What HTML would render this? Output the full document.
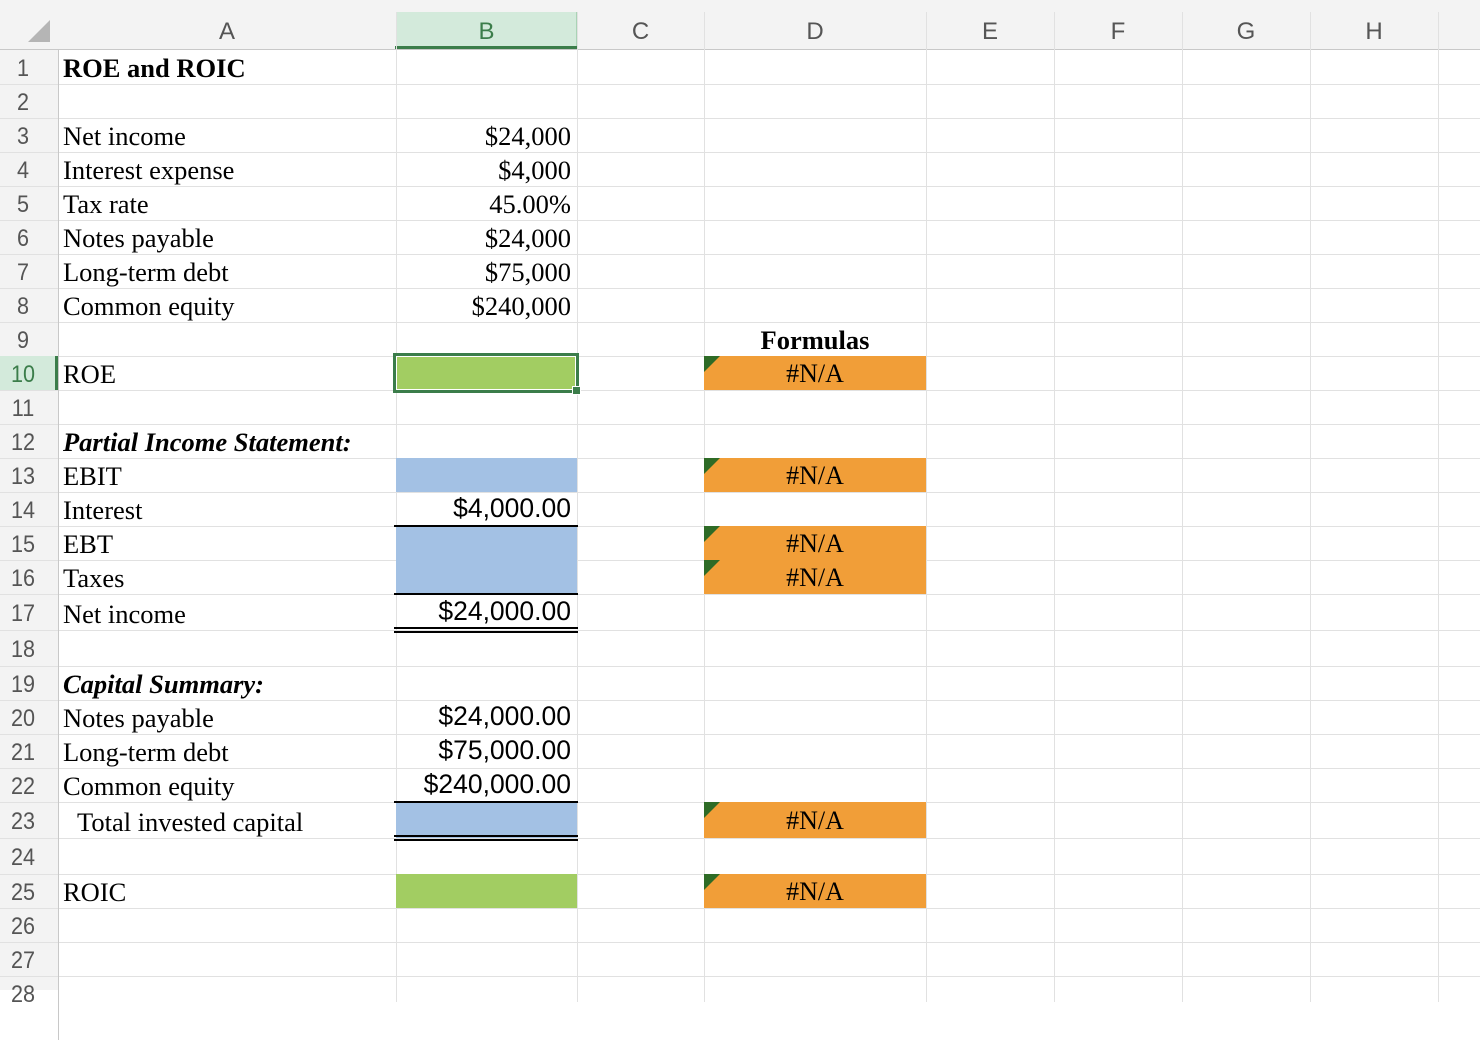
<!DOCTYPE html>
<html><head><meta charset="utf-8"><style>
body{margin:0;width:1480px;height:990px;overflow:hidden;background:#fff;position:relative;font-family:"Liberation Serif",serif}
div{position:absolute;box-sizing:border-box}
.hl{height:1px;background:#e1e1e1;left:0;width:1480px}
.vl{width:1px;background:#e1e1e1;top:12px;height:990px}
.rh{left:0;width:46px;color:#555;font-family:"Liberation Sans",sans-serif;font-size:24px;text-align:center;line-height:34px;transform:scaleX(0.9)}
.ch{top:12px;height:38px;line-height:40px;color:#555;font-family:"Liberation Sans",sans-serif;font-size:24px;text-align:center}
.t{left:63px;font-size:26.5px;line-height:34px;white-space:nowrap;color:#000;top:1px}
.n{left:396px;width:181px;text-align:right;padding-right:6px;font-size:26.5px;line-height:34px}
.s{left:396px;width:181px;text-align:right;padding-right:6px;font-family:"Liberation Sans",sans-serif;font-size:26.5px;line-height:34px}
.o{left:704px;width:222px;background:#f19e38;text-align:center;font-size:26px;line-height:36px;height:34px}
.o:before{content:"";position:absolute;left:0;top:0;border-top:16px solid #2e6b26;border-right:16px solid transparent}
.bl{left:396px;width:181px;background:#a3c1e4}
.gr{left:396px;width:181px;background:#a2cd62}
.k{left:394px;width:184px;background:#000}
</style></head><body>
<div style="left:0;top:0;width:1480px;height:50px;background:#f3f3f3"></div>
<div style="left:0;top:50px;width:58px;height:940px;background:#f3f3f3"></div>
<div style="left:28px;top:20px;width:0;height:0;border-bottom:22px solid #b5b5b5;border-left:22px solid transparent"></div>
<div style="left:396px;top:12px;width:181px;height:38px;background:#d3eadb;border-left:1px solid #a9d3b5;border-right:1px solid #a9d3b5"></div>
<div style="left:395px;top:46px;width:183px;height:4px;background:#3b7d4a"></div>
<div class="hl" style="top:49px;background:#c8c8c8"></div>
<div class="hl" style="top:84px"></div><div class="hl" style="top:118px"></div><div class="hl" style="top:152px"></div><div class="hl" style="top:186px"></div><div class="hl" style="top:220px"></div><div class="hl" style="top:254px"></div><div class="hl" style="top:288px"></div><div class="hl" style="top:322px"></div><div class="hl" style="top:356px"></div><div class="hl" style="top:390px"></div><div class="hl" style="top:424px"></div><div class="hl" style="top:458px"></div><div class="hl" style="top:492px"></div><div class="hl" style="top:526px"></div><div class="hl" style="top:560px"></div><div class="hl" style="top:594px"></div><div class="hl" style="top:630px"></div><div class="hl" style="top:666px"></div><div class="hl" style="top:700px"></div><div class="hl" style="top:734px"></div><div class="hl" style="top:768px"></div><div class="hl" style="top:802px"></div><div class="hl" style="top:838px"></div><div class="hl" style="top:874px"></div><div class="hl" style="top:908px"></div><div class="hl" style="top:942px"></div><div class="hl" style="top:976px"></div>
<div class="vl" style="left:58px;background:#c8c8c8;top:50px"></div>
<div class="vl" style="left:396px"></div><div class="vl" style="left:577px"></div><div class="vl" style="left:704px"></div><div class="vl" style="left:926px"></div><div class="vl" style="left:1054px"></div><div class="vl" style="left:1182px"></div><div class="vl" style="left:1310px"></div><div class="vl" style="left:1438px"></div>
<div class="ch" style="left:58px;width:338px">A</div>
<div class="ch" style="left:396px;width:181px;color:#3b7d4a">B</div>
<div class="ch" style="left:577px;width:127px">C</div>
<div class="ch" style="left:704px;width:222px">D</div>
<div class="ch" style="left:926px;width:128px">E</div>
<div class="ch" style="left:1054px;width:128px">F</div>
<div class="ch" style="left:1182px;width:128px">G</div>
<div class="ch" style="left:1310px;width:128px">H</div>
<div class="rh" style="top:52px">1</div><div class="rh" style="top:86px">2</div><div class="rh" style="top:120px">3</div><div class="rh" style="top:154px">4</div><div class="rh" style="top:188px">5</div><div class="rh" style="top:222px">6</div><div class="rh" style="top:256px">7</div><div class="rh" style="top:290px">8</div><div class="rh" style="top:324px">9</div>
<div style="left:0;top:356px;width:58px;height:34px;background:#d3eadb"></div><div style="left:55px;top:356px;width:3px;height:34px;background:#3b7d4a"></div>
<div class="rh" style="top:358px;color:#3b7d4a">10</div><div class="rh" style="top:392px">11</div><div class="rh" style="top:426px">12</div><div class="rh" style="top:460px">13</div><div class="rh" style="top:494px">14</div><div class="rh" style="top:528px">15</div><div class="rh" style="top:562px">16</div><div class="rh" style="top:597px">17</div><div class="rh" style="top:633px">18</div><div class="rh" style="top:668px">19</div><div class="rh" style="top:702px">20</div><div class="rh" style="top:736px">21</div><div class="rh" style="top:770px">22</div><div class="rh" style="top:805px">23</div><div class="rh" style="top:841px">24</div><div class="rh" style="top:876px">25</div><div class="rh" style="top:910px">26</div><div class="rh" style="top:944px">27</div><div class="rh" style="top:978px">28</div>
<div class="bl" style="top:458px;height:34px"></div>
<div class="bl" style="top:526px;height:68px"></div>
<div class="bl" style="top:802px;height:36px"></div>
<div class="gr" style="top:874px;height:34px"></div>
<div class="k" style="top:525px;height:2px"></div>
<div class="k" style="top:593px;height:2px"></div>
<div class="k" style="top:627px;height:2px"></div><div class="k" style="top:631px;height:2px"></div>
<div class="k" style="top:801px;height:2px"></div>
<div class="k" style="top:835px;height:2px"></div><div class="k" style="top:839px;height:2px"></div>
<div style="left:393px;top:353px;width:186px;height:40px;border:3px solid #3b7d4a;background:#fff"></div>
<div style="left:397px;top:357px;width:178px;height:32px;background:#a2cd62"></div>
<div style="left:572px;top:386px;width:9px;height:9px;background:#3b7d4a;border:1px solid #fff"></div>
<div class="t" style="top:51px;font-weight:bold">ROE and ROIC</div>
<div class="t" style="top:119px">Net income</div>
<div class="t" style="top:153px">Interest expense</div>
<div class="t" style="top:187px">Tax rate</div>
<div class="t" style="top:221px">Notes payable</div>
<div class="t" style="top:255px">Long-term debt</div>
<div class="t" style="top:289px">Common equity</div>
<div class="t" style="top:357px">ROE</div>
<div class="t" style="top:425px;font-weight:bold;font-style:italic">Partial Income Statement:</div>
<div class="t" style="top:459px">EBIT</div>
<div class="t" style="top:493px">Interest</div>
<div class="t" style="top:527px">EBT</div>
<div class="t" style="top:561px">Taxes</div>
<div class="t" style="top:597px">Net income</div>
<div class="t" style="top:667px;font-weight:bold;font-style:italic">Capital Summary:</div>
<div class="t" style="top:701px">Notes payable</div>
<div class="t" style="top:735px">Long-term debt</div>
<div class="t" style="top:769px">Common equity</div>
<div class="t" style="top:805px;left:77px">Total invested capital</div>
<div class="t" style="top:875px">ROIC</div>
<div class="n" style="top:119px">$24,000</div>
<div class="n" style="top:153px">$4,000</div>
<div class="n" style="top:187px">45.00%</div>
<div class="n" style="top:221px">$24,000</div>
<div class="n" style="top:255px">$75,000</div>
<div class="n" style="top:289px">$240,000</div>
<div class="s" style="top:491px">$4,000.00</div>
<div class="s" style="top:594px">$24,000.00</div>
<div class="s" style="top:699px">$24,000.00</div>
<div class="s" style="top:733px">$75,000.00</div>
<div class="s" style="top:767px">$240,000.00</div>
<div class="t" style="top:323px;left:704px;width:222px;text-align:center;font-weight:bold">Formulas</div>
<div class="o" style="top:356px">#N/A</div>
<div class="o" style="top:458px">#N/A</div>
<div class="o" style="top:526px">#N/A</div>
<div class="o" style="top:560px">#N/A</div>
<div class="o" style="top:802px;height:36px;line-height:38px">#N/A</div>
<div class="o" style="top:874px">#N/A</div>
</body></html>
